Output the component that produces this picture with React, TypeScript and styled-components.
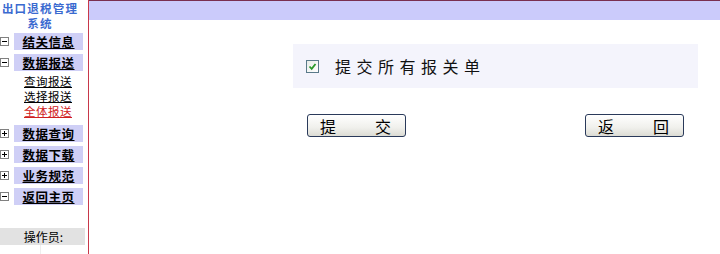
import styled, { createGlobalStyle } from "styled-components";

const GlobalStyle = createGlobalStyle`
  html, body {
    margin: 0;
    padding: 0;
    background: #ffffff;
  }
  body {
    font-family: "Noto Sans CJK SC", "DejaVu Sans", sans-serif;
  }
`;

const Page = styled.div`
  display: flex;
  width: 720px;
  height: 254px;
  overflow: hidden;
`;

const Sidebar = styled.div`
  width: 88px;
  flex-shrink: 0;
  border-right: 1px solid #c8384a;
  display: flex;
  flex-direction: column;
`;

const Title = styled.div`
  display: flex;
  flex-direction: column;
  align-items: center;
  padding-top: 1px;
  padding-right: 8px;
`;

const TitleLine = styled.div`
  color: #3a6ad0;
  font-size: 11.5px;
  font-weight: 700;
  letter-spacing: 1.2px;
  height: 15px;
  line-height: 15px;
  white-space: nowrap;
`;

const Menu = styled.div`
  display: flex;
  flex-direction: column;
  margin-top: 2px;
`;

const Row = styled.div<{ $gap?: number }>`
  display: flex;
  align-items: center;
  height: 17px;
  margin-top: ${(p) => p.$gap ?? 4}px;
`;

const Toggle = styled.span`
  width: 7px;
  height: 7px;
  border: 1px solid #808080;
  margin-right: 5px;
  position: relative;
  background: #fff;
  &::before {
    content: "";
    position: absolute;
    left: 1px;
    right: 1px;
    top: 3px;
    height: 1px;
    background: #000;
  }
`;

const Plus = styled(Toggle)`
  &::after {
    content: "";
    position: absolute;
    top: 1px;
    bottom: 1px;
    left: 3px;
    width: 1px;
    background: #000;
  }
`;

const Label = styled.a`
  display: block;
  width: 69px;
  height: 17px;
  line-height: 17px;
  background: #cfcff6;
  color: #000;
  font-size: 12.5px;
  font-weight: 700;
  text-align: center;
  text-decoration: underline;
  letter-spacing: 0.5px;
`;

const SubList = styled.div`
  display: flex;
  flex-direction: column;
  padding-left: 24px;
  margin-top: 3px;
  margin-bottom: 3px;
`;

const SubLink = styled.a<{ $active?: boolean }>`
  font-size: 11.5px;
  letter-spacing: 0.5px;
  line-height: 15px;
  height: 15px;
  color: ${(p) => (p.$active ? "#d02020" : "#000")};
  text-decoration: underline;
`;

const Operator = styled.div`
  margin-top: auto;
  display: flex;
  flex-direction: column;
`;

const OpLabel = styled.div`
  background: #e2e2e2;
  width: 85px;
  height: 17px;
  line-height: 17px;
  font-size: 12px;
  text-align: center;
  color: #000;
  padding-left: 2px;
  box-sizing: border-box;
`;

const OpValue = styled.div`
  margin-left: 40px;
  width: 45px;
  height: 9px;
  background: #fff;
  border-left: 1px solid #eee;
`;

const Main = styled.div`
  flex: 1;
  display: flex;
  flex-direction: column;
  border-top: 1px solid #7a3050;
`;

const Banner = styled.div`
  height: 19px;
  background: #cbcbfb;
`;

const Content = styled.div`
  display: flex;
  flex-direction: column;
  padding-left: 204px;
  padding-top: 24px;
`;

const Panel = styled.div`
  width: 405px;
  height: 44px;
  background: #f4f4fc;
  display: flex;
  align-items: center;
  padding-left: 13px;
  box-sizing: border-box;
`;

const Check = styled.span`
  width: 11px;
  height: 11px;
  border: 1px solid #5a7a8a;
  background: linear-gradient(135deg, #e8ece8, #ffffff);
  display: flex;
  align-items: center;
  justify-content: center;
  margin-right: 16px;
`;

const PanelText = styled.span`
  font-family: "Noto Sans CJK SC", sans-serif;
  font-size: 16px;
  letter-spacing: 5.5px;
  color: #111;
`;

const Buttons = styled.div`
  width: 405px;
  display: flex;
  justify-content: space-between;
  padding: 0 14px;
  box-sizing: border-box;
  margin-top: 26px;
`;

const Button = styled.button`
  width: 99px;
  height: 23px;
  border: 1px solid #2a3a5a;
  border-radius: 3px;
  background: linear-gradient(#ffffff, #f0f0ec 60%, #dcdcd4);
  display: flex;
  align-items: center;
  justify-content: space-between;
  padding: 0 14px 0 12px;
  font-family: "Noto Sans CJK SC", sans-serif;
  font-size: 16px;
  color: #000;
  box-sizing: border-box;
`;

const groups = [
  { label: "结关信息", open: true },
  { label: "数据报送", open: true, subs: ["查询报送", "选择报送", "全体报送"] },
  { label: "数据查询", open: false },
  { label: "数据下载", open: false },
  { label: "业务规范", open: false },
  { label: "返回主页", open: true },
];

export default function App() {
  return (
    <>
      <GlobalStyle />
      <Page>
        <Sidebar>
          <Title>
            <TitleLine>出口退税管理</TitleLine>
            <TitleLine>系统</TitleLine>
          </Title>
          <Menu>
            {groups.map((g, i) => (
              <div key={g.label}>
                <Row $gap={i === 0 ? 0 : i === 2 ? 3 : 4}>
                  {g.open ? <Toggle /> : <Plus />}
                  <Label>{g.label}</Label>
                </Row>
                {g.subs && (
                  <SubList>
                    {g.subs.map((s, j) => (
                      <SubLink key={s} $active={j === 2}>
                        {s}
                      </SubLink>
                    ))}
                  </SubList>
                )}
              </div>
            ))}
          </Menu>
          <Operator>
            <OpLabel>操作员:</OpLabel>
            <OpValue />
          </Operator>
        </Sidebar>
        <Main>
          <Banner />
          <Content>
            <Panel>
              <Check>
                <svg width="9" height="9" viewBox="0 0 9 9">
                  <path d="M1.5 4.5 L3.7 6.8 L7.5 2" fill="none" stroke="#2a9a2a" strokeWidth="1.8" />
                </svg>
              </Check>
              <PanelText>提交所有报关单</PanelText>
            </Panel>
            <Buttons>
              <Button>
                <span>提</span>
                <span>交</span>
              </Button>
              <Button>
                <span>返</span>
                <span>回</span>
              </Button>
            </Buttons>
          </Content>
        </Main>
      </Page>
    </>
  );
}
